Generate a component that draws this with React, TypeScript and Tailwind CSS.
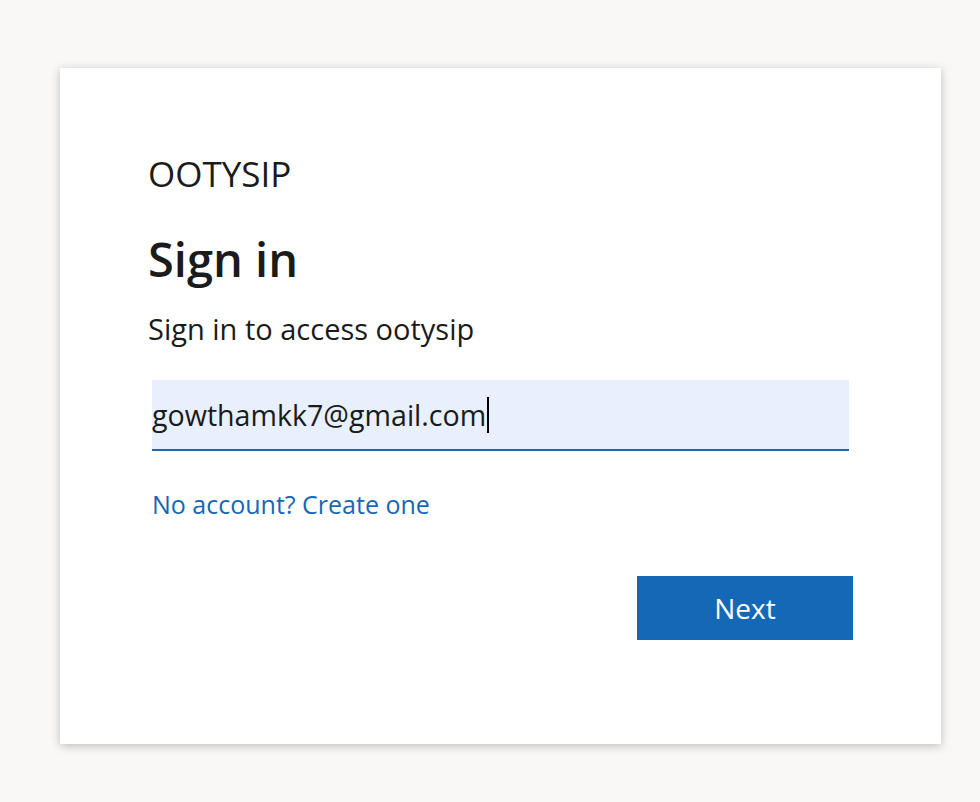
export default function App() {
  return (
    <div
      className="min-h-[802px] w-full bg-[#f9f8f7] pt-[68px] pl-[60px]"
      style={{ fontFamily: '"Open Sans", "Noto Sans", sans-serif' }}
    >
      <div className="flex h-[676px] w-[881px] flex-col bg-white px-[88px] pt-[86px] text-[#1b1b1b] shadow-[0_2px_9px_rgba(0,0,0,0.24)]">
        {/* Brand */}
        <div className="text-[35px] leading-[40px]">OOTYSIP</div>

        {/* Title */}
        <h1 className="mt-[37px] text-[47px] font-semibold leading-[56px]">Sign in</h1>
        <p className="mt-[25px] text-[29px] leading-[34px]">Sign in to access ootysip</p>

        {/* Email field */}
        <div className="mt-[34px] ml-[4px] mr-[4px] flex h-[71px] items-center border-b-2 border-[#1568b5] bg-[#e8f0fe]">
          <span className="text-[28.6px] leading-[34px]">gowthamkk7@gmail.com</span>
          <span className="ml-[1px] h-[36px] w-[2px] bg-black" />
        </div>

        <a href="#" className="mt-[38px] ml-[4px] self-start text-[25px] leading-[30px] text-[#1568b5]">
          No account? Create one
        </a>

        <div className="mt-[57px] flex justify-end">
          <button className="h-[64px] w-[216px] bg-[#1568b5] text-[28px] text-white">Next</button>
        </div>
      </div>
    </div>
  );
}
